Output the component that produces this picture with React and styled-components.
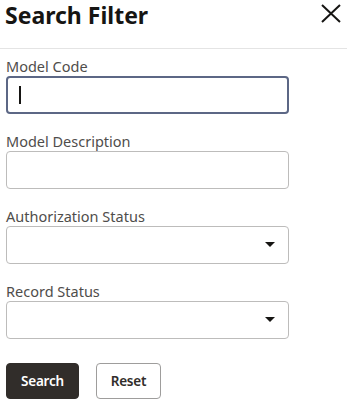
import React from 'react';
import styled, { createGlobalStyle } from 'styled-components';

const GlobalStyle = createGlobalStyle`
  html, body {
    margin: 0;
    padding: 0;
    background: #fff;
  }

  body {
    font-family: "Noto Sans", "Open Sans", sans-serif;
    color: #161513;
  }
`;

const Panel = styled.div`
  width: 347px;
  min-height: 404px;
  box-sizing: border-box;
`;

const Header = styled.div`
  display: flex;
  align-items: center;
  justify-content: space-between;
  height: 30px;
  padding: 0 5px 18px 5px;
  border-bottom: 1px solid #e4e4e4;
`;

const Title = styled.h1`
  margin: 0;
  font-size: 23px;
  line-height: 30px;
  font-weight: 700;
  color: #161513;
`;

const CloseButton = styled.button`
  display: flex;
  align-items: center;
  justify-content: center;
  width: 22px;
  height: 22px;
  padding: 0;
  border: none;
  background: none;
  color: #161513;
  cursor: pointer;
  margin-top: -3px;
`;

const Form = styled.form`
  display: flex;
  flex-direction: column;
  gap: 17px;
  padding: 7px 6px 0 6px;
`;

const Field = styled.div`
  display: flex;
  flex-direction: column;
  width: 283px;
`;

const Label = styled.label`
  font-size: 14.5px;
  line-height: 20px;
  color: #4f4d4b;
`;

const Control = styled.div`
  position: relative;
  height: 38px;
  box-sizing: border-box;
  border: ${({ $focused }) => ($focused ? '2px solid #5c6785' : '1px solid #bdbcbb')};
  border-radius: 4px;
  background: #fff;
  display: flex;
  align-items: center;
  padding: ${({ $focused }) => ($focused ? '0 11px' : '0 12px')};
`;

const Input = styled.input`
  flex: 1;
  min-width: 0;
  height: 100%;
  border: none;
  outline: none;
  background: transparent;
  font-family: inherit;
  font-size: 14px;
  color: #161513;
  padding: 0;
`;

const Caret = styled.span`
  display: block;
  width: 1.5px;
  height: 18px;
  background: #161513;
`;

const Arrow = styled.span`
  position: absolute;
  right: 13px;
  top: 15px;
  width: 0;
  height: 0;
  border-left: 5px solid transparent;
  border-right: 5px solid transparent;
  border-top: 5px solid #161513;
`;

const Actions = styled.div`
  display: flex;
  gap: 17px;
  margin-top: 7px;
`;

const Button = styled.button`
  height: 36px;
  box-sizing: border-box;
  padding: 0;
  width: ${({ $width }) => $width}px;
  border-radius: 4px;
  font-family: inherit;
  font-size: 13.5px;
  font-weight: 600;
  letter-spacing: -0.2px;
  cursor: pointer;
  border: ${({ $primary }) => ($primary ? '1px solid #312d2a' : '1px solid #9e9d9c')};
  background: ${({ $primary }) => ($primary ? '#312d2a' : '#fff')};
  color: ${({ $primary }) => ($primary ? '#fff' : '#312d2a')};
`;

const CloseIcon = () => (
  <svg width="20" height="19" viewBox="0 0 20 19" fill="none" stroke="currentColor" strokeWidth="2">
    <path d="M1 1l18 17M19 1L1 18" />
  </svg>
);

const fields = [
  { id: 'modelCode', label: 'Model Code', type: 'text', focused: true },
  { id: 'modelDescription', label: 'Model Description', type: 'text' },
  { id: 'authStatus', label: 'Authorization Status', type: 'select' },
  { id: 'recordStatus', label: 'Record Status', type: 'select' },
];

const App = () => (
  <>
    <GlobalStyle />
    <Panel>
      <Header>
        <Title>Search Filter</Title>
        <CloseButton aria-label="Close">
          <CloseIcon />
        </CloseButton>
      </Header>
      <Form onSubmit={(e) => e.preventDefault()}>
        {fields.map((field) => (
          <Field key={field.id}>
            <Label htmlFor={field.id}>{field.label}</Label>
            <Control $focused={field.focused}>
              {field.focused && <Caret />}
              {field.type === 'text' && !field.focused && <Input id={field.id} type="text" />}
              {field.type === 'select' && <Arrow />}
            </Control>
          </Field>
        ))}
        <Actions>
          <Button type="submit" $primary $width={73}>Search</Button>
          <Button type="button" $width={65}>Reset</Button>
        </Actions>
      </Form>
    </Panel>
  </>
);

export default App;
